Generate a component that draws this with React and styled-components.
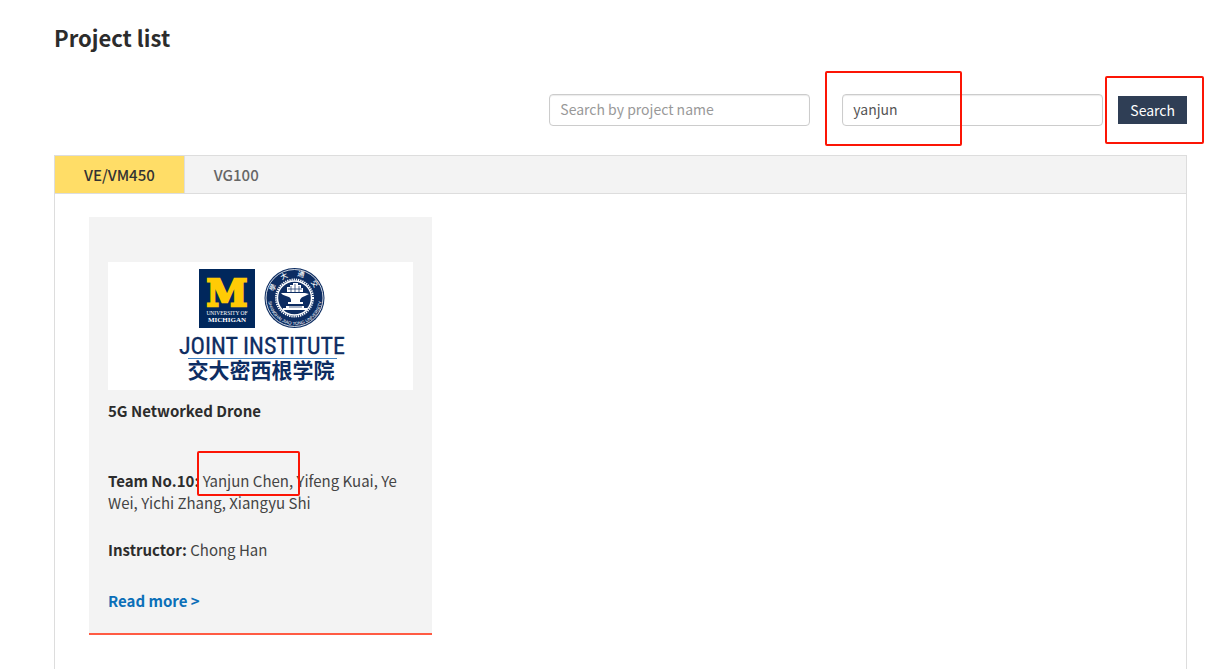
import React, { useState } from "react"
import styled, { createGlobalStyle } from "styled-components"

const projects = [
  {
    title: "5G Networked Drone",
    team: "Team No.10:",
    lead: "Yanjun Chen,",
    members: "Yifeng Kuai, Ye Wei, Yichi Zhang, Xiangyu Shi",
    instructor: "Chong Han",
  },
]

const tabs = ["VE/VM450", "VG100"]

const InstituteLogo = () => (
  <LogoSvg viewBox="-12 0 190 120" role="img" aria-label="Joint Institute">
    <defs>
      <path id="sealTop" d="M95 34a22 22 0 0 1 44 0" />
      <path id="sealBottom" d="M90 34a27 27 0 0 0 54 0" />
    </defs>
    <rect x="21" y="5" width="56" height="59" fill="#00275c" />
    <text x="49" y="42" textAnchor="middle" fontFamily="DejaVu Serif" fontWeight="700" fontSize="37" fill="#ffcb05" stroke="#ffcb05" strokeWidth="2.4">M</text>
    <text x="49" y="51" textAnchor="middle" fontFamily="Liberation Serif" fontSize="5.5" fill="#fff">UNIVERSITY OF</text>
    <text x="49" y="58" textAnchor="middle" fontFamily="Liberation Serif" fontWeight="700" fontSize="7" fill="#fff">MICHIGAN</text>

    {/* university seal */}
    <circle cx="116.5" cy="34" r="30" fill="#0d2d62" />
    <circle cx="116.5" cy="34" r="28.5" fill="none" stroke="#fff" strokeWidth="0.8" />
    <circle cx="116.5" cy="34" r="18.5" fill="none" stroke="#fff" strokeWidth="2" strokeDasharray="1.3 0.9" />
    <circle cx="116.5" cy="34" r="17" fill="none" stroke="#fff" strokeWidth="1.4" />
    <g fill="#fff">
      <path d="M109 28v-5h3v-2h3v-2h5v2h3v3h2v4z" />
      <path d="M103 29h24l4 1-4 2q-4 1-5 4v2h3v2h-15v-2h3v-2q0-3-5-4-4-1-5-3z" />
      <path d="M108 42h18v2h3v2h-24v-2h3z" />
    </g>
    <path d="M113 22v6M117 20v8M121 22v6M110 25h14M111 43h13" stroke="#0d2d62" strokeWidth="0.7" />
    <text fontFamily="Noto Sans CJK SC" fontSize="7" fontWeight="500" fill="#fff">
      <textPath href="#sealTop" startOffset="9%">學</textPath>
      <textPath href="#sealTop" startOffset="30%">大</textPath>
      <textPath href="#sealTop" startOffset="53%">通</textPath>
      <textPath href="#sealTop" startOffset="75%">交</textPath>
    </text>
    <text fontFamily="Liberation Sans" fontSize="4.5" fill="#fff">
      <textPath href="#sealBottom" startOffset="50%" textAnchor="middle">SHANGHAI JIAO TONG UNIVERSITY</textPath>
    </text>

    <text x="84" y="90" textAnchor="middle" fontFamily="Roboto Condensed, Roboto" fontSize="24" fill="#0d2d62" stroke="#0d2d62" strokeWidth="0.3">JOINT INSTITUTE</text>
    <path d="M10 94.5h149" stroke="#3f7fbf" strokeWidth="1" />
    <text x="83" y="114" textAnchor="middle" fontFamily="Noto Sans CJK SC" fontWeight="700" fontSize="21" fill="#0d2d62">交大密西根学院</text>
  </LogoSvg>
)

const ProjectCard = ({ project }) => (
  <Card>
    <CardImage>
      <InstituteLogo />
    </CardImage>
    <CardTitle>{project.title}</CardTitle>
    <CardText>
      <strong>{project.team}</strong>{" "}
      <Marked>
        {project.lead}
        <Marker $top="-19px" $right="-7px" $bottom="-4px" $left="-6px" />
      </Marked>{" "}
      {project.members}
    </CardText>
    <CardText>
      <strong>Instructor:</strong> {project.instructor}
    </CardText>
    <ReadMore href="#">Read more &gt;</ReadMore>
  </Card>
)

const App = () => {
  const [active, setActive] = useState(tabs[0])
  const [member, setMember] = useState("yanjun")

  return (
    <Page>
      <GlobalStyle />
      <PageTitle>Project list</PageTitle>
      <SearchForm onSubmit={(e) => e.preventDefault()}>
        <Field>
          <StyledInput type="text" aria-label="Project name" placeholder="Search by project name" />
        </Field>
        <Field>
          <StyledInput
            type="text"
            aria-label="Member name"
            value={member}
            onChange={(e) => setMember(e.target.value)}
          />
          <Marker $top="-23px" $right="141px" $bottom="-20px" $left="-17px" />
        </Field>
        <ButtonWrapper>
          <SearchButton type="submit">Search</SearchButton>
          <Marker $top="-20px" $right="-17px" $bottom="-20px" $left="-13px" />
        </ButtonWrapper>
      </SearchForm>
      <Panel>
        <TabBar role="tablist">
          {tabs.map((tab) => (
            <Tab
              key={tab}
              type="button"
              role="tab"
              aria-selected={tab === active}
              $active={tab === active}
              onClick={() => setActive(tab)}
            >
              {tab}
            </Tab>
          ))}
        </TabBar>
        <CardGrid>
          {projects.map((project) => (
            <ProjectCard key={project.title} project={project} />
          ))}
        </CardGrid>
      </Panel>
    </Page>
  )
}

export default App

const GlobalStyle = createGlobalStyle`
    * {
        box-sizing: border-box;
    }
    body {
        margin: 0;
        background: #fff;
        color: #444;
        font-family: "Noto Sans CJK SC", "Open Sans", sans-serif;
        font-size: 15px;
        line-height: 22px;
    }
    button, input {
        font-family: inherit;
    }
`

const Page = styled.main`
    display: flex;
    flex-direction: column;
    min-height: 100vh;
    padding: 21px 43px 0 54px;
`

const PageTitle = styled.h1`
    margin: 0 0 41px;
    font-size: 22px;
    line-height: 32px;
    font-weight: 700;
    color: #2c2c2c;
`

const SearchForm = styled.form`
    display: flex;
    justify-content: flex-end;
    align-items: center;
    margin-bottom: 29px;
`

const Field = styled.div`
    position: relative;
    width: 261px;
    margin-right: 32px;
    & + & {
        margin-right: 15px;
    }
`

const StyledInput = styled.input`
    display: block;
    width: 100%;
    height: 32px;
    padding: 0 10px 2px;
    border: 1px solid #ccc;
    border-radius: 4px;
    outline: none;
    background: #fff;
    box-shadow: inset 0 1px 1px rgba(0, 0, 0, 0.08);
    color: #555;
    font-size: 14px;
    &::placeholder {
        color: #999;
        opacity: 1;
    }
`

const ButtonWrapper = styled.div`
    position: relative;
`

const SearchButton = styled.button`
    display: block;
    height: 28px;
    padding: 0 12px;
    border: 0;
    background: #2f3e55;
    color: #fff;
    font-size: 14px;
    line-height: 28px;
    cursor: pointer;
`

/* red frame drawn over whatever it is placed in */
const Marker = styled.span`
    position: absolute;
    top: ${(props) => props.$top};
    right: ${(props) => props.$right};
    bottom: ${(props) => props.$bottom};
    left: ${(props) => props.$left};
    border: 2px solid #fc1505;
    border-radius: 2px;
    pointer-events: none;
`

const Marked = styled.span`
    position: relative;
    display: inline-block;
`

const Panel = styled.section`
    flex: 1;
    border: 1px solid #ddd;
    border-bottom: 0;
`

const TabBar = styled.div`
    display: flex;
    background: #f3f3f3;
    border-bottom: 1px solid #ddd;
`

const Tab = styled.button`
    height: 37px;
    padding: 0 29px;
    border: 0;
    background: ${(props) => (props.$active ? "#ffdd67" : "transparent")};
    border-right: ${(props) => (props.$active ? "1px solid #ddd" : "0")};
    color: ${(props) => (props.$active ? "#333" : "#666")};
    font-size: 15px;
    font-weight: 500;
    cursor: pointer;
`

const CardGrid = styled.div`
    display: flex;
    flex-wrap: wrap;
    gap: 24px;
    padding: 23px 34px;
`

const Card = styled.article`
    width: 343px;
    padding: 45px 19px 21px;
    background: #f3f3f3;
    border-bottom: 2px solid #ff5b43;
`

const CardImage = styled.div`
    display: flex;
    justify-content: center;
    padding: 2px 0 6px;
    background: #fff;
`

const LogoSvg = styled.svg`
    display: block;
    width: 190px;
    height: 120px;
`

const CardTitle = styled.h2`
    margin: 10px 0 48px;
    font-size: 15px;
    line-height: 22px;
    font-weight: 700;
    color: #2c2c2c;
`

const CardText = styled.p`
    margin: 0 0 25px;
    strong {
        color: #2c2c2c;
    }
`

const ReadMore = styled.a`
    display: block;
    margin-top: 29px;
    color: #0b6fb8;
    font-weight: 700;
    text-decoration: none;
`
